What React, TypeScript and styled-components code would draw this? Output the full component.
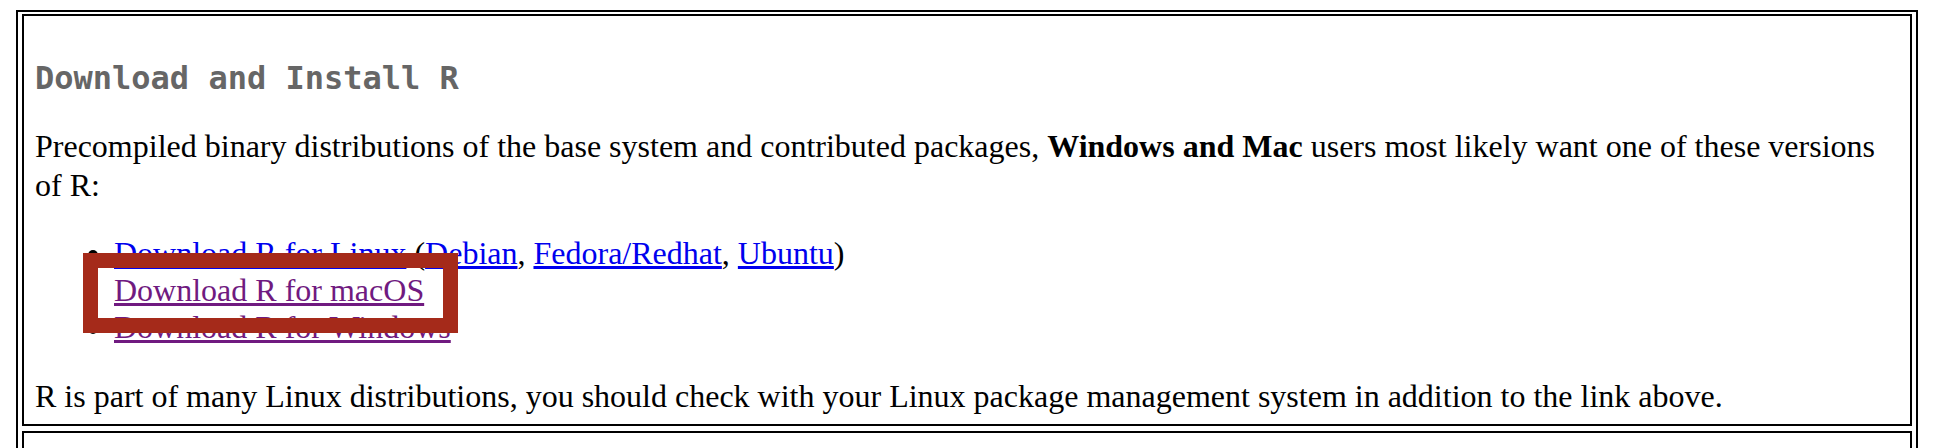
import React from "react";
import styled, { createGlobalStyle } from "styled-components";

const GlobalStyle = createGlobalStyle`
  html, body {
    margin: 0;
    padding: 0;
    background: #ffffff;
    overflow: hidden;
  }
  body {
    font-family: "Liberation Serif", "Times New Roman", serif;
    color: #000000;
  }
`;

const Page = styled.div`
  position: relative;
  width: 1940px;
  height: 448px;
  padding: 10px 0 0 16px;
  box-sizing: border-box;
`;

const Table = styled.div`
  width: 1902px;
  box-sizing: border-box;
  border: 2px solid #000;
  padding: 2px 4px;
  display: flex;
  flex-direction: column;
  gap: 5px;
`;

const Cell = styled.div<{ $minHeight?: number }>`
  border: 2px solid #000;
  padding: 0 12px 8px 11px;
  min-height: ${(p) => p.$minHeight ?? 0}px;
`;

const Heading = styled.h2`
  margin: 43px 0 30px;
  font-family: "DejaVu Sans Mono", monospace;
  font-weight: bold;
  font-size: 32px;
  color: #666666;
`;

const Para = styled.p`
  margin: 0;
  font-size: 32px;
  line-height: 39px;
`;

const List = styled.ul`
  margin: 30px 0 31px;
  padding-left: 79px;
  font-size: 32px;
  line-height: 37px;
`;

const Link = styled.a<{ $visited?: boolean }>`
  color: ${(p) => (p.$visited ? "#701a80" : "#0000ee")};
  text-decoration: underline;
`;

const Highlight = styled.div`
  position: absolute;
  left: 83px;
  top: 253px;
  width: 375px;
  height: 80px;
  box-sizing: border-box;
  border: 15px solid #a52a1a;
  pointer-events: none;
`;

export default function App() {
  return (
    <>
      <GlobalStyle />
      <Page>
        <Table>
          <Cell>
            <Heading>Download and Install R</Heading>
            <Para>
              Precompiled binary distributions of the base system and
              contributed packages, <b>Windows and Mac</b> users most likely
              want one of these versions of R:
            </Para>
            <List>
              <li>
                <Link href="#">Download R for Linux</Link> (
                <Link href="#">Debian</Link>,{" "}
                <Link href="#">Fedora/Redhat</Link>,{" "}
                <Link href="#">Ubuntu</Link>)
              </li>
              <li>
                <Link href="#" $visited>
                  Download R for macOS
                </Link>
              </li>
              <li>
                <Link href="#" $visited>
                  Download R for Windows
                </Link>
              </li>
            </List>
            <Para>
              R is part of many Linux distributions, you should check with
              your Linux package management system in addition to the link
              above.
            </Para>
          </Cell>
          <Cell $minHeight={120} />
        </Table>
        <Highlight />
      </Page>
    </>
  );
}
